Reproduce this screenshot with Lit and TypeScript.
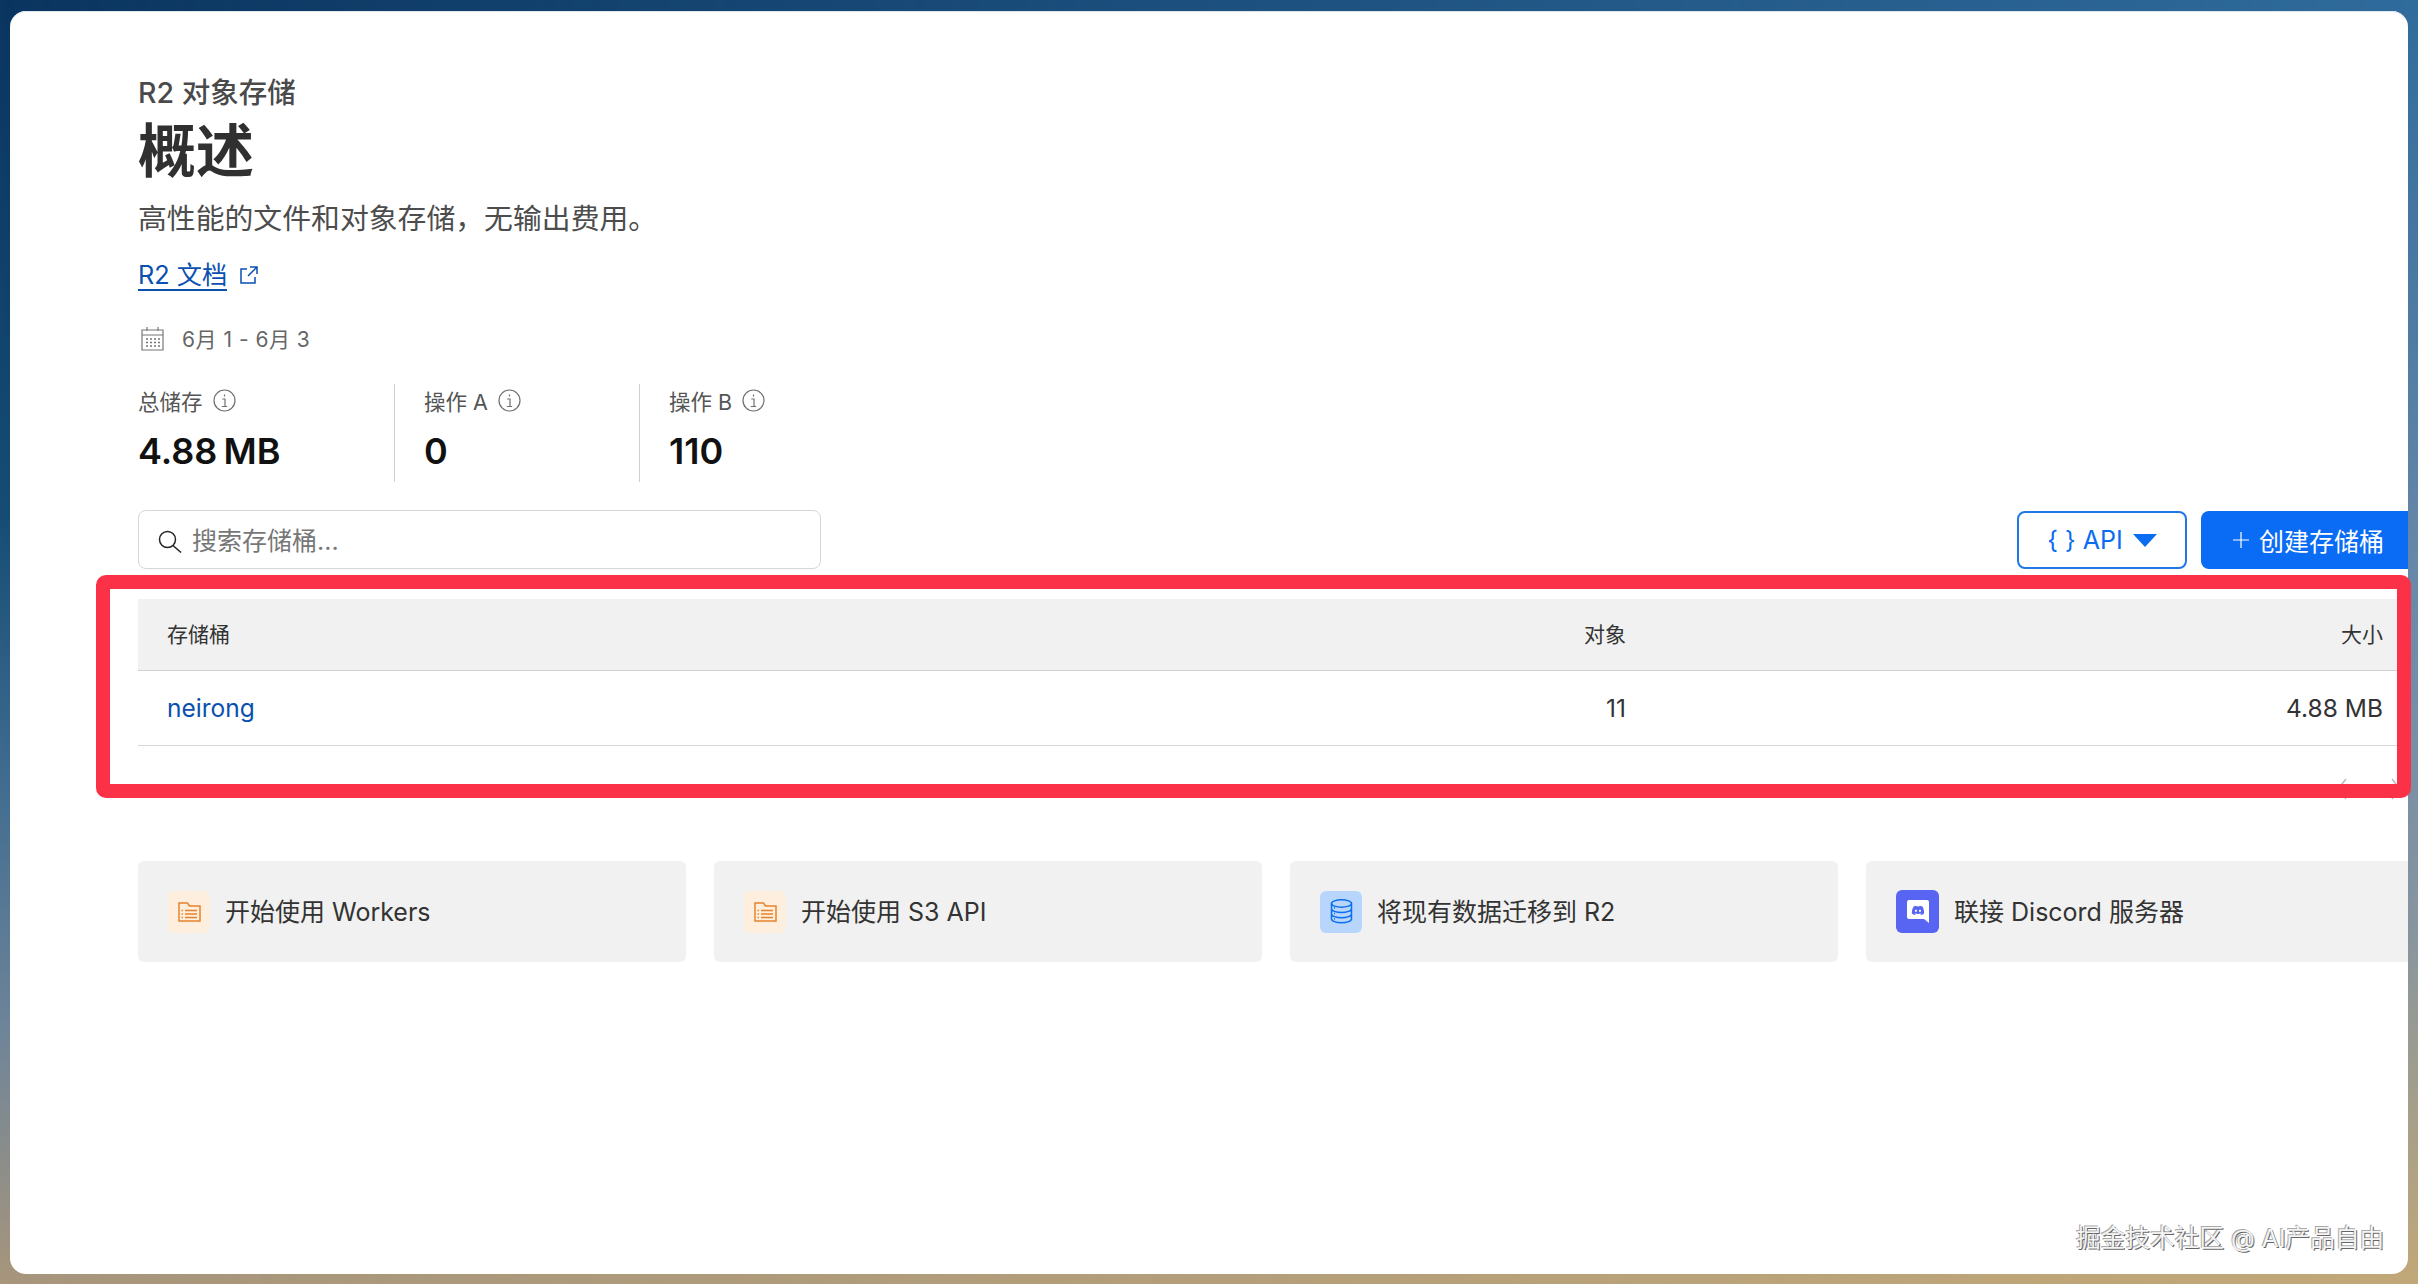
import { LitElement, html, css } from "lit";
import { customElement } from "lit/decorators.js";

const info = html`<svg class="info" viewBox="0 0 23 23"><circle cx="11.500" cy="11.500" r="10.500" fill="none" stroke="#707070" stroke-width="1.200"/><path d="M11.500 5.500v2M9.200 10h2.800v7.500M8.800 17.500h5.400" fill="none" stroke="#707070" stroke-width="1.200"/></svg>`;

const folder = html`<span class="ic orange"><svg viewBox="0 0 23 20" width="23" height="20" fill="none" stroke="#e8822a" stroke-width="1.500"><path d="M1 19V1h8.500l2 3H22v15z"/><path d="M7 8.500h12M7 12h12M7 15.500h12M3.500 8.500h1.500M3.500 12h1.500M3.500 15.500h1.500"/></svg></span>`;

const db = html`<span class="ic blue"><svg viewBox="0 0 23 25" width="23" height="25" fill="none" stroke="#0b6ff0" stroke-width="1.500"><ellipse cx="11.500" cy="4.500" rx="10" ry="3.700"/><path d="M1.500 4.500v15.500c0 2 4.500 3.800 10 3.800s10-1.800 10-3.800V4.500M1.500 9.700c0 2 4.500 3.800 10 3.800s10-1.800 10-3.800M1.500 15c0 2 4.500 3.800 10 3.800s10-1.800 10-3.800"/><path d="M4 9h1M4 14.500h1M4 20h1"/></svg></span>`;

const discord = html`<span class="ic indigo"><svg viewBox="0 0 22 23" width="22" height="23"><path fill="#fff" d="M2 0h18a2 2 0 0 1 2 2v21l-5-4H2a2 2 0 0 1-2-2V2a2 2 0 0 1 2-2z"/><g transform="translate(4 3.500) scale(.58)"><path fill="#5865f2" d="M19.300 5.300A17 17 0 0 0 15 4l-.6 1.100a15 15 0 0 0-4.800 0L9 4a17 17 0 0 0-4.300 1.300C2 9.400 1.200 13.300 1.600 17.200A17 17 0 0 0 6.800 19.800l1.100-1.800c-.6-.2-1.200-.5-1.700-.8l.4-.3a12 12 0 0 0 10.800 0l.4.3c-.5.3-1.100.6-1.700.8l1.100 1.800a17 17 0 0 0 5.200-2.600c.5-4.500-.8-8.400-2.700-11.900zM8.500 14.800c-1 0-1.900-1-1.900-2.100s.8-2.100 1.900-2.100 1.900 1 1.900 2.100-.8 2.100-1.900 2.100zm7 0c-1 0-1.900-1-1.900-2.100s.8-2.100 1.900-2.100 1.900 1 1.900 2.100-.9 2.100-1.900 2.100z"/></g></svg></span>`;

@customElement("app-root")
export class AppRoot extends LitElement {
  static styles = css`
    :host {
      display: block;
      width: 2418px;
      height: 1284px;
      overflow: hidden;
      font-family: Inter, "Noto Sans CJK SC", sans-serif;
      color: #333;
    }
    .desk {
      box-sizing: border-box;
      width: 2418px;
      height: 1284px;
      padding: 11px 10px 10px;
      background: linear-gradient(180deg, #0a3560 0%, #164c74 40%, #3f6b8f 60%, #6d8499 80%, #a8967c 100%);
      position: relative;
    }
    .desk::before {
      content: "";
      position: absolute;
      inset: 0;
      background: linear-gradient(180deg, #2f6b9c 0%, #6e8cab 50%, #87959f 72%, #c2a877 100%);
      -webkit-mask-image: linear-gradient(90deg, transparent 0%, #000 100%);
      mask-image: linear-gradient(90deg, transparent 0%, #000 100%);
    }
    .win {
      position: relative;
      box-sizing: border-box;
      height: 1263px;
      background: #fff;
      border-radius: 16px;
      padding: 66px 0 0 128px;
      overflow: hidden;
      box-shadow: inset 0 1px 0 #dfe4e8;
    }
    .crumb { font-size: 28.500px; line-height: 32px; color: #4a4a4a; font-weight: 500; }
    h1 { margin: 9px 0 0; font-size: 58px; line-height: 66px; font-weight: 700; color: #303030; }
    .desc { margin-top: 17px; font-size: 28.850px; line-height: 36px; color: #4d4d4d; }
    .docs { margin-top: 24px; display: flex; align-items: flex-start; gap: 12px; height: 30px; color: #0a50b0; font-size: 25.300px; }
    .docs span { border-bottom: 2px solid #0a50b0; line-height: 28px; }
    .docs svg { width: 20px; height: 20px; margin-top: 4px; }
    .date { margin-top: 32px; display: flex; align-items: center; gap: 18px; height: 30px; color: #666; font-size: 21px; letter-spacing: .5px; padding-left: 3px; }
    .date svg { width: 23px; height: 25px; }
    .stats { margin-top: 31px; display: flex; height: 98px; }
    .stat { box-sizing: border-box; display: flex; flex-direction: column; }
    .stat + .stat { border-left: 1px solid #cfcfcf; padding-left: 29px; }
    .s1 { width: 256px; } .s2 { width: 245px; } .s3 { width: 160px; }
    .lbl { display: flex; align-items: center; gap: 10px; height: 32px; font-size: 21.500px; color: #555; }
    .info { width: 23px; height: 23px; }
    .val { margin-top: 12px; font-size: 36px; line-height: 46px; font-weight: 600; color: #111; word-spacing: -3px; }
    .bar { margin-top: 28px; display: flex; justify-content: space-between; align-items: flex-start; height: 59px; }
    .search { box-sizing: border-box; width: 683px; height: 59px; border: 1px solid #d6d6d6; border-radius: 8px; display: flex; align-items: center; padding: 0 0 2px 19px; gap: 10px; font-size: 25px; color: #777; }
    .search svg { width: 24px; height: 23px; margin-top: 6px; }
    .btns { display: flex; gap: 14px; margin-top: 1px; }
    button { font: inherit; box-sizing: border-box; height: 58px; border-radius: 8px; display: flex; align-items: center; font-size: 25px; padding: 0; }
    .api { width: 170px; background: #fff; border: 2px solid #1f78e6; color: #0a6cf0; justify-content: center; gap: 10px; }
    .tri { width: 0; height: 0; border-left: 12px solid transparent; border-right: 12px solid transparent; border-top: 13px solid #0a6cf0; }
    .create { width: 207px; background: #0a6cf5; border: 0; color: #fff; padding-left: 32px; gap: 10px; border-radius: 8px 0 0 8px; }
    .create svg { width: 16px; height: 16px; }
    .table { margin-top: 30px; width: 2270px; font-size: 21px; }
    .row { display: grid; grid-template-columns: 1fr 200px 757px; padding: 0 25px 0 29px; align-items: center; box-sizing: border-box; }
    .row > :nth-child(n + 2) { text-align: right; }
    .head { height: 72px; background: #f1f1f1; border-bottom: 1px solid #d2d2d2; color: #333; padding-bottom: 4px; }
    .body { height: 75px; border-bottom: 1px solid #d8d8d8; font-size: 24.500px; }
    .body a { color: #0a50b0; }
    .pager { display: flex; justify-content: flex-end; gap: 44px; height: 52px; padding: 32px 7px 0 0; box-sizing: border-box; }
    .pager svg { width: 10px; height: 22px; }
    .cards { margin-top: 63px; display: flex; gap: 28px; }
    .card { box-sizing: border-box; width: 548px; height: 101px; flex: none; background: #f1f1f1; border-radius: 6px; display: flex; align-items: center; padding-left: 30px; gap: 15px; font-size: 25px; color: #333; }
    .card b { font-weight: 400; margin-bottom: 3px; }
    .ic { width: 42px; height: 42px; border-radius: 6px; display: flex; align-items: center; justify-content: center; flex: none; }
    .orange { background: #fdeedd; }
    .blue { background: #b8d6fd; }
    .indigo { background: #5865f2; width: 43px; height: 43px; }
    .frame { position: absolute; left: 96px; top: 575px; width: 2315px; height: 223px; box-sizing: border-box; border: 14px solid #fb3247; border-radius: 10px; }
    .mark { position: absolute; left: 2076px; top: 1223px; line-height: 30px; font-size: 24.700px; color: #f4f4f4; text-shadow: 1px 1px 0 #666, -1px -1px 0 #aaa; }
  `;

  render() {
    return html`<div class="desk">
      <div class="win">
        <div class="crumb">R2 对象存储</div>
        <h1>概述</h1>
        <div class="desc">高性能的文件和对象存储，无输出费用。</div>
        <div class="docs"><span>R2 文档</span>
          <svg viewBox="0 0 20 20" fill="none" stroke="#0a50b0" stroke-width="1.500"><path d="M8 4H2v14h14v-6M11 2h7v7M18 2L9 11"/></svg></div>
        <div class="date">
          <svg viewBox="0 0 23 25" fill="none" stroke="#777" stroke-width="1.200"><path d="M1 4h21v20h-21zM1 9h21M6 1v4M17 1v4"/><path stroke-dasharray="2 2" stroke-width="1.500" d="M5 13h14M5 16.500h14M5 20h14"/></svg>
          6月 1 - 6月 3
        </div>
        <div class="stats">
          <div class="stat s1"><div class="lbl">总储存 ${info}</div><div class="val">4.88 MB</div></div>
          <div class="stat s2"><div class="lbl">操作 A ${info}</div><div class="val">0</div></div>
          <div class="stat s3"><div class="lbl">操作 B ${info}</div><div class="val">110</div></div>
        </div>
        <div class="bar">
          <div class="search">
            <svg viewBox="0 0 24 23" fill="none" stroke="#222" stroke-width="1.500"><circle cx="9.500" cy="9.500" r="8"/><path d="M15 15.500l8 7"/></svg>
            搜索存储桶...
          </div>
          <div class="btns">
            <button class="api">{ } API <i class="tri"></i></button>
            <button class="create"><svg viewBox="0 0 16 16" fill="none" stroke="#fff" stroke-width="1.200"><path d="M8 0v16M0 8h16"/></svg>创建存储桶</button>
          </div>
        </div>
        <div class="table">
          <div class="row head"><div>存储桶</div><div>对象</div><div>大小</div></div>
          <div class="row body"><div><a>neirong</a></div><div>11</div><div>4.88 MB</div></div>
          <div class="pager">
            <svg viewBox="0 0 10 22" fill="none" stroke="#b5b5b5" stroke-width="1.300"><path d="M9 1L1 11l8 10"/></svg>
            <svg viewBox="0 0 10 22" fill="none" stroke="#b5b5b5" stroke-width="1.300"><path d="M1 1l8 10-8 10"/></svg>
          </div>
        </div>
        <div class="cards">
          <div class="card">${folder}<b>开始使用 Workers</b></div>
          <div class="card">${folder}<b>开始使用 S3 API</b></div>
          <div class="card">${db}<b>将现有数据迁移到 R2</b></div>
          <div class="card">${discord}<b>联接 Discord 服务器</b></div>
        </div>
      </div>
      <div class="frame"></div>
      <div class="mark">掘金技术社区 @ AI产品自由</div>
    </div>`;
  }
}
